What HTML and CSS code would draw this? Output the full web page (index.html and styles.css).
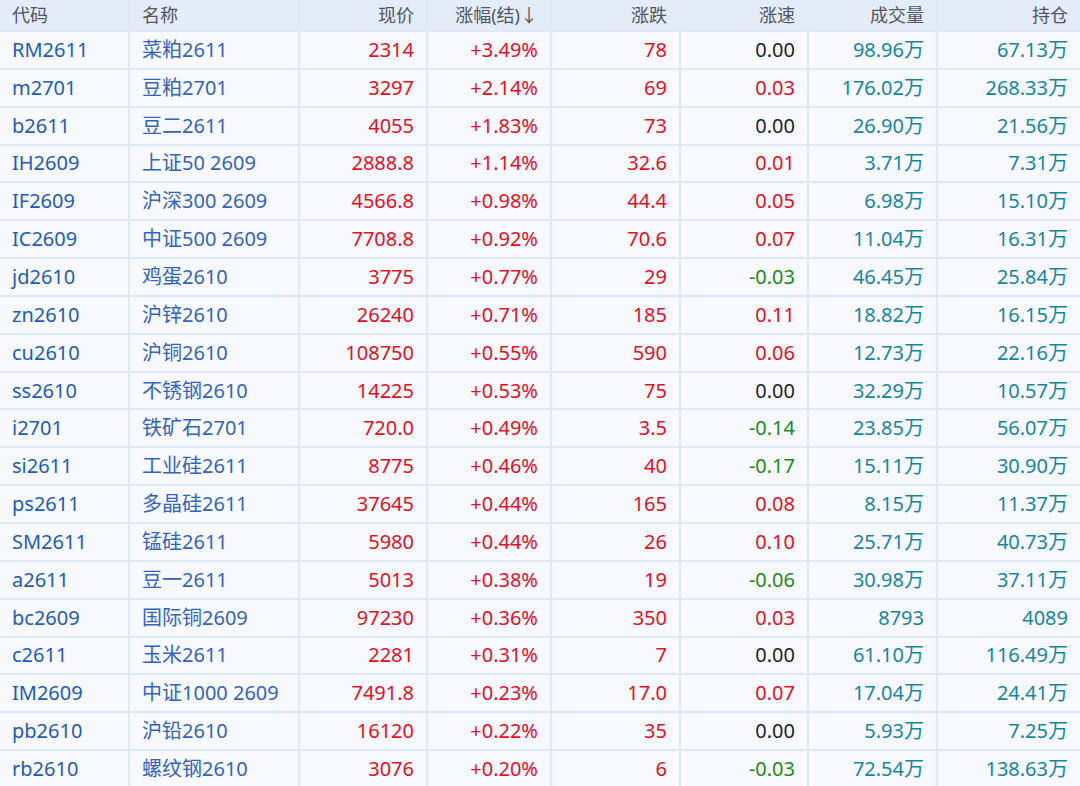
FILE: index.html
```html
<!DOCTYPE html>
<html lang="zh-CN">
<head>
<meta charset="utf-8">
<title>行情</title>
<link rel="stylesheet" href="styles.css">
</head>
<body>
<table class="quotes">
<colgroup>
<col class="c1"><col class="c2"><col class="c3"><col class="c4"><col class="c5"><col class="c6"><col class="c7"><col class="c8">
</colgroup>
<thead>
<tr><th class="l">代码</th><th class="l">名称</th><th>现价</th><th>涨幅(结)↓</th><th>涨跌</th><th>涨速</th><th>成交量</th><th>持仓</th></tr>
</thead>
<tbody>
<tr><td class="code">RM2611</td><td class="name">菜粕2611</td><td class="up">2314</td><td class="up">+3.49%</td><td class="up">78</td><td class="flat">0.00</td><td class="vol">98.96万</td><td class="vol">67.13万</td></tr>
<tr><td class="code">m2701</td><td class="name">豆粕2701</td><td class="up">3297</td><td class="up">+2.14%</td><td class="up">69</td><td class="up">0.03</td><td class="vol">176.02万</td><td class="vol">268.33万</td></tr>
<tr><td class="code">b2611</td><td class="name">豆二2611</td><td class="up">4055</td><td class="up">+1.83%</td><td class="up">73</td><td class="flat">0.00</td><td class="vol">26.90万</td><td class="vol">21.56万</td></tr>
<tr><td class="code">IH2609</td><td class="name">上证50 2609</td><td class="up">2888.8</td><td class="up">+1.14%</td><td class="up">32.6</td><td class="up">0.01</td><td class="vol">3.71万</td><td class="vol">7.31万</td></tr>
<tr><td class="code">IF2609</td><td class="name">沪深300 2609</td><td class="up">4566.8</td><td class="up">+0.98%</td><td class="up">44.4</td><td class="up">0.05</td><td class="vol">6.98万</td><td class="vol">15.10万</td></tr>
<tr><td class="code">IC2609</td><td class="name">中证500 2609</td><td class="up">7708.8</td><td class="up">+0.92%</td><td class="up">70.6</td><td class="up">0.07</td><td class="vol">11.04万</td><td class="vol">16.31万</td></tr>
<tr><td class="code">jd2610</td><td class="name">鸡蛋2610</td><td class="up">3775</td><td class="up">+0.77%</td><td class="up">29</td><td class="down">-0.03</td><td class="vol">46.45万</td><td class="vol">25.84万</td></tr>
<tr><td class="code">zn2610</td><td class="name">沪锌2610</td><td class="up">26240</td><td class="up">+0.71%</td><td class="up">185</td><td class="up">0.11</td><td class="vol">18.82万</td><td class="vol">16.15万</td></tr>
<tr><td class="code">cu2610</td><td class="name">沪铜2610</td><td class="up">108750</td><td class="up">+0.55%</td><td class="up">590</td><td class="up">0.06</td><td class="vol">12.73万</td><td class="vol">22.16万</td></tr>
<tr><td class="code">ss2610</td><td class="name">不锈钢2610</td><td class="up">14225</td><td class="up">+0.53%</td><td class="up">75</td><td class="flat">0.00</td><td class="vol">32.29万</td><td class="vol">10.57万</td></tr>
<tr><td class="code">i2701</td><td class="name">铁矿石2701</td><td class="up">720.0</td><td class="up">+0.49%</td><td class="up">3.5</td><td class="down">-0.14</td><td class="vol">23.85万</td><td class="vol">56.07万</td></tr>
<tr><td class="code">si2611</td><td class="name">工业硅2611</td><td class="up">8775</td><td class="up">+0.46%</td><td class="up">40</td><td class="down">-0.17</td><td class="vol">15.11万</td><td class="vol">30.90万</td></tr>
<tr><td class="code">ps2611</td><td class="name">多晶硅2611</td><td class="up">37645</td><td class="up">+0.44%</td><td class="up">165</td><td class="up">0.08</td><td class="vol">8.15万</td><td class="vol">11.37万</td></tr>
<tr><td class="code">SM2611</td><td class="name">锰硅2611</td><td class="up">5980</td><td class="up">+0.44%</td><td class="up">26</td><td class="up">0.10</td><td class="vol">25.71万</td><td class="vol">40.73万</td></tr>
<tr><td class="code">a2611</td><td class="name">豆一2611</td><td class="up">5013</td><td class="up">+0.38%</td><td class="up">19</td><td class="down">-0.06</td><td class="vol">30.98万</td><td class="vol">37.11万</td></tr>
<tr><td class="code">bc2609</td><td class="name">国际铜2609</td><td class="up">97230</td><td class="up">+0.36%</td><td class="up">350</td><td class="up">0.03</td><td class="vol">8793</td><td class="vol">4089</td></tr>
<tr><td class="code">c2611</td><td class="name">玉米2611</td><td class="up">2281</td><td class="up">+0.31%</td><td class="up">7</td><td class="flat">0.00</td><td class="vol">61.10万</td><td class="vol">116.49万</td></tr>
<tr><td class="code">IM2609</td><td class="name">中证1000 2609</td><td class="up">7491.8</td><td class="up">+0.23%</td><td class="up">17.0</td><td class="up">0.07</td><td class="vol">17.04万</td><td class="vol">24.41万</td></tr>
<tr><td class="code">pb2610</td><td class="name">沪铅2610</td><td class="up">16120</td><td class="up">+0.22%</td><td class="up">35</td><td class="flat">0.00</td><td class="vol">5.93万</td><td class="vol">7.25万</td></tr>
<tr><td class="code">rb2610</td><td class="name">螺纹钢2610</td><td class="up">3076</td><td class="up">+0.20%</td><td class="up">6</td><td class="down">-0.03</td><td class="vol">72.54万</td><td class="vol">138.63万</td></tr>
</tbody>
</table>
</body>
</html>
```

FILE: styles.css
```css
html, body {
  margin: 0;
  padding: 0;
  background: #f7f9fe;
  overflow: hidden;
}

.quotes {
  width: 1080px;
  border-collapse: collapse;
  table-layout: fixed;
  font-family: "Noto Sans", "Noto Sans CJK SC", sans-serif;
  font-size: 20px;
  background: #f7f9fe;
}

.c1 { width: 129px; }
.c2 { width: 170px; }
.c3 { width: 128px; }
.c4 { width: 124px; }
.c5 { width: 129px; }
.c6 { width: 128px; }
.c7 { width: 129px; }
.c8 { width: 143px; }

.quotes th,
.quotes td {
  border: 2px solid #dfe8f5;
  padding: 0 12px 0 12px;
  text-align: right;
  white-space: nowrap;
  overflow: hidden;
}

.quotes tr > :first-child { border-left: none; }
.quotes tr > :last-child { border-right: none; }
.quotes thead th { border-top: none; }

.quotes th {
  height: 30px;
  background: #e3ecf8;
  font-weight: normal;
  font-size: 18px;
  color: #4f5561;
  line-height: 30px;
}

.quotes td {
  height: 35.85px;
  line-height: 30px;
}

.quotes .l { text-align: left; }

.code {
  text-align: left !important;
  color: #1e5cb8;
}

.name {
  text-align: left !important;
  color: #3563bb;
}

.up { color: #e5101f; }
.down { color: #1f8a14; }
.flat { color: #1b1f2e; }
.vol { color: #1686a0; }
```
